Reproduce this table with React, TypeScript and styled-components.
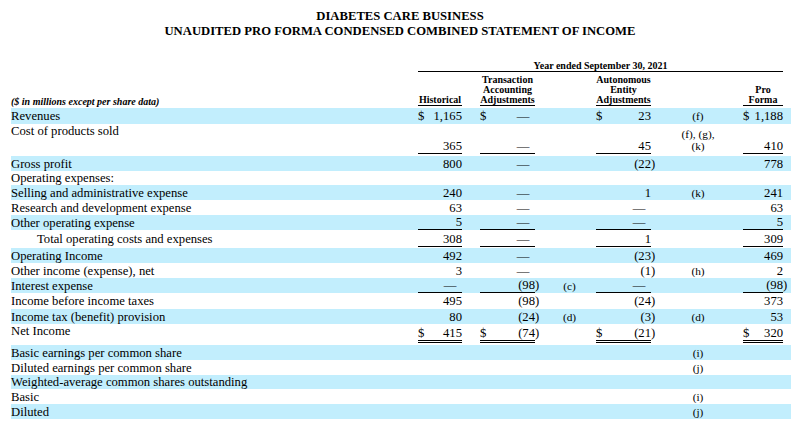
import React from "react";
import styled, { createGlobalStyle } from "styled-components";

const GlobalStyle = createGlobalStyle`
  html, body { margin: 0; padding: 0; background: #ffffff; }
  body { font-family: "Liberation Serif", "Times New Roman", serif; color: #000000; }
`;

const BAND = "#c2eefd";

const Page = styled.div`
  width: 800px;
  height: 431px;
  overflow: hidden;
  background: #ffffff;
`;

const Title = styled.div`
  padding-top: 9px;
  text-align: center;
  font-weight: bold;
  font-size: 12.67px;
  line-height: 15px;
`;

const Statement = styled.table`
  margin: 22px 0 0 11px;
  width: 780px;
  table-layout: fixed;
  border-collapse: collapse;
  border-spacing: 0;
`;

const Col = styled.col<{ $w: number }>`
  width: ${(p) => p.$w}px;
`;

const HeadRow = styled.tr<{ $h: number }>`
  height: ${(p) => p.$h}px;
`;

const HeadCell = styled.th<{ $pb?: number }>`
  padding: 0 0 ${(p) => p.$pb ?? 0}px 0;
  vertical-align: bottom;
  text-align: center;
  font-size: 10px;
  line-height: 10.2px;
  font-weight: bold;
  white-space: nowrap;
`;

const UnitsCell = styled(HeadCell)`
  text-align: left;
  font-style: italic;
`;

const HeadText = styled.div`
  border-bottom: 1px solid #000000;
`;

const Row = styled.tr<{ $band: boolean; $h: number }>`
  height: ${(p) => p.$h}px;
  background: ${(p) => (p.$band ? BAND : "transparent")};
`;

const LabelCell = styled.td<{ $top?: boolean; $indent?: boolean }>`
  padding: 0 0 0 ${(p) => (p.$indent ? 26 : 0)}px;
  vertical-align: ${(p) => (p.$top ? "top" : "middle")};
  font-size: 12.67px;
  line-height: 14px;
  white-space: nowrap;
`;

const AmountCell = styled.td<{ $bottom: boolean; $pb: number }>`
  padding: 0 0 ${(p) => p.$pb}px 0;
  vertical-align: ${(p) => (p.$bottom ? "bottom" : "middle")};
`;

const Amount = styled.div<{ $rule?: "single" | "double" }>`
  display: flex;
  justify-content: space-between;
  align-items: baseline;
  font-size: 12.67px;
  line-height: 14px;
  white-space: nowrap;
  border-bottom: ${(p) =>
    p.$rule === "double" ? "3px double #000000" : p.$rule === "single" ? "1px solid #000000" : "none"};
`;

const Value = styled.span<{ $dash?: boolean }>`
  margin-left: auto;
  padding-right: ${(p) => (p.$dash ? 5.5 : 0)}px;
`;

const Paren = styled.span`
  margin-right: -0.333em;
`;

const NoteCell = styled.td<{ $pl: number }>`
  padding: 0 0 0 ${(p) => p.$pl}px;
  vertical-align: middle;
  text-align: center;
  font-size: 11.3px;
  line-height: 12px;
  white-space: nowrap;
`;

const Spacer = styled.td`
  padding: 0;
`;

type RowData = {
  label: string;
  h: number;
  top?: boolean;
  indent?: boolean;
  dollar?: boolean;
  rule?: "single" | "double";
  pb?: number;
  v?: [string, string, string, string];
  n1?: string[];
  n2?: string[];
};

const rows: RowData[] = [
  { label: "Revenues", h: 16, dollar: true, v: ["1,165", "—", "23", "1,188"], n2: ["(f)"] },
  { label: "Cost of products sold", h: 32, top: true, rule: "single", pb: 2, v: ["365", "—", "45", "410"], n2: ["(f), (g),", "(k)"] },
  { label: "Gross profit", h: 15, v: ["800", "—", "(22)", "778"] },
  { label: "Operating expenses:", h: 14 },
  { label: "Selling and administrative expense", h: 15, v: ["240", "—", "1", "241"], n2: ["(k)"] },
  { label: "Research and development expense", h: 15, v: ["63", "—", "—", "63"] },
  { label: "Other operating expense", h: 15, rule: "single", pb: 0, v: ["5", "—", "—", "5"] },
  { label: "Total operating costs and expenses", indent: true, h: 18, rule: "single", pb: 1, v: ["308", "—", "1", "309"] },
  { label: "Operating Income", h: 15, v: ["492", "—", "(23)", "469"] },
  { label: "Other income (expense), net", h: 15, v: ["3", "—", "(1)", "2"], n2: ["(h)"] },
  { label: "Interest expense", h: 15, rule: "single", pb: 0, v: ["—", "(98)", "—", "(98)"], n1: ["(c)"] },
  { label: "Income before income taxes", h: 16, v: ["495", "(98)", "(24)", "373"] },
  { label: "Income tax (benefit) provision", h: 15, v: ["80", "(24)", "(3)", "53"], n1: ["(d)"], n2: ["(d)"] },
  { label: "Net Income", h: 21, top: true, dollar: true, rule: "double", pb: 2, v: ["415", "(74)", "(21)", "320"] },
  { label: "Basic earnings per common share", h: 15, n2: ["(i)"] },
  { label: "Diluted earnings per common share", h: 15, n2: ["(j)"] },
  { label: "Weighted-average common shares outstanding", h: 14 },
  { label: "Basic", h: 15, n2: ["(i)"] },
  { label: "Diluted", h: 15, n2: ["(j)"] },
];

function renderValue(v: string) {
  if (v === "—") return <Value $dash>—</Value>;
  if (v.startsWith("(") && v.endsWith(")")) {
    return (
      <Value>
        {v.slice(0, -1)}
        <Paren>)</Paren>
      </Value>
    );
  }
  return <Value>{v}</Value>;
}

function Lines({ items }: { items?: string[] }) {
  if (!items) return null;
  return (
    <>
      {items.map((t, i) => (
        <React.Fragment key={i}>
          {i > 0 && <br />}
          {t}
        </React.Fragment>
      ))}
    </>
  );
}

function AmountTd({ row, value }: { row: RowData; value?: string }) {
  if (!value) return <AmountCell $bottom={false} $pb={0} />;
  return (
    <AmountCell $bottom={!!row.rule} $pb={row.pb ?? 0}>
      <Amount $rule={row.rule}>
        {row.dollar && <span>$</span>}
        {renderValue(value)}
      </Amount>
    </AmountCell>
  );
}

function StatementRow({ row, band }: { row: RowData; band: boolean }) {
  const v = row.v;
  return (
    <Row $band={band} $h={row.h}>
      <LabelCell $top={row.top} $indent={row.indent}>
        {row.label}
      </LabelCell>
      <AmountTd row={row} value={v?.[0]} />
      <Spacer />
      <AmountTd row={row} value={v?.[1]} />
      <NoteCell $pl={8}>
        <Lines items={row.n1} />
      </NoteCell>
      <AmountTd row={row} value={v?.[2]} />
      <NoteCell $pl={2}>
        <Lines items={row.n2} />
      </NoteCell>
      <AmountTd row={row} value={v?.[3]} />
      <Spacer />
    </Row>
  );
}

export default function App() {
  return (
    <Page>
      <GlobalStyle />
      <Title>
        DIABETES CARE BUSINESS
        <br />
        UNAUDITED PRO FORMA CONDENSED COMBINED STATEMENT OF INCOME
      </Title>
      <Statement>
        <colgroup>
          <Col $w={407} />
          <Col $w={44} />
          <Col $w={18} />
          <Col $w={55} />
          <Col $w={61} />
          <Col $w={55} />
          <Col $w={92} />
          <Col $w={40} />
          <Col $w={8} />
        </colgroup>
        <thead>
          <HeadRow $h={11.2}>
            <Spacer />
            <HeadCell colSpan={7}>
              <HeadText>Year ended September 30, 2021</HeadText>
            </HeadCell>
            <Spacer />
          </HeadRow>
          <HeadRow $h={36}>
            <UnitsCell $pb={1}>($ in millions except per share data)</UnitsCell>
            <HeadCell $pb={2}>
              <HeadText>Historical</HeadText>
            </HeadCell>
            <Spacer />
            <HeadCell $pb={2}>
              <HeadText>
                Transaction
                <br />
                Accounting
                <br />
                Adjustments
              </HeadText>
            </HeadCell>
            <Spacer />
            <HeadCell $pb={2}>
              <HeadText>
                Autonomous
                <br />
                Entity
                <br />
                Adjustments
              </HeadText>
            </HeadCell>
            <Spacer />
            <HeadCell $pb={2}>
              <HeadText>
                Pro
                <br />
                Forma
              </HeadText>
            </HeadCell>
            <Spacer />
          </HeadRow>
        </thead>
        <tbody>
          {rows.map((r, i) => (
            <StatementRow key={i} row={r} band={i % 2 === 0} />
          ))}
        </tbody>
      </Statement>
    </Page>
  );
}
